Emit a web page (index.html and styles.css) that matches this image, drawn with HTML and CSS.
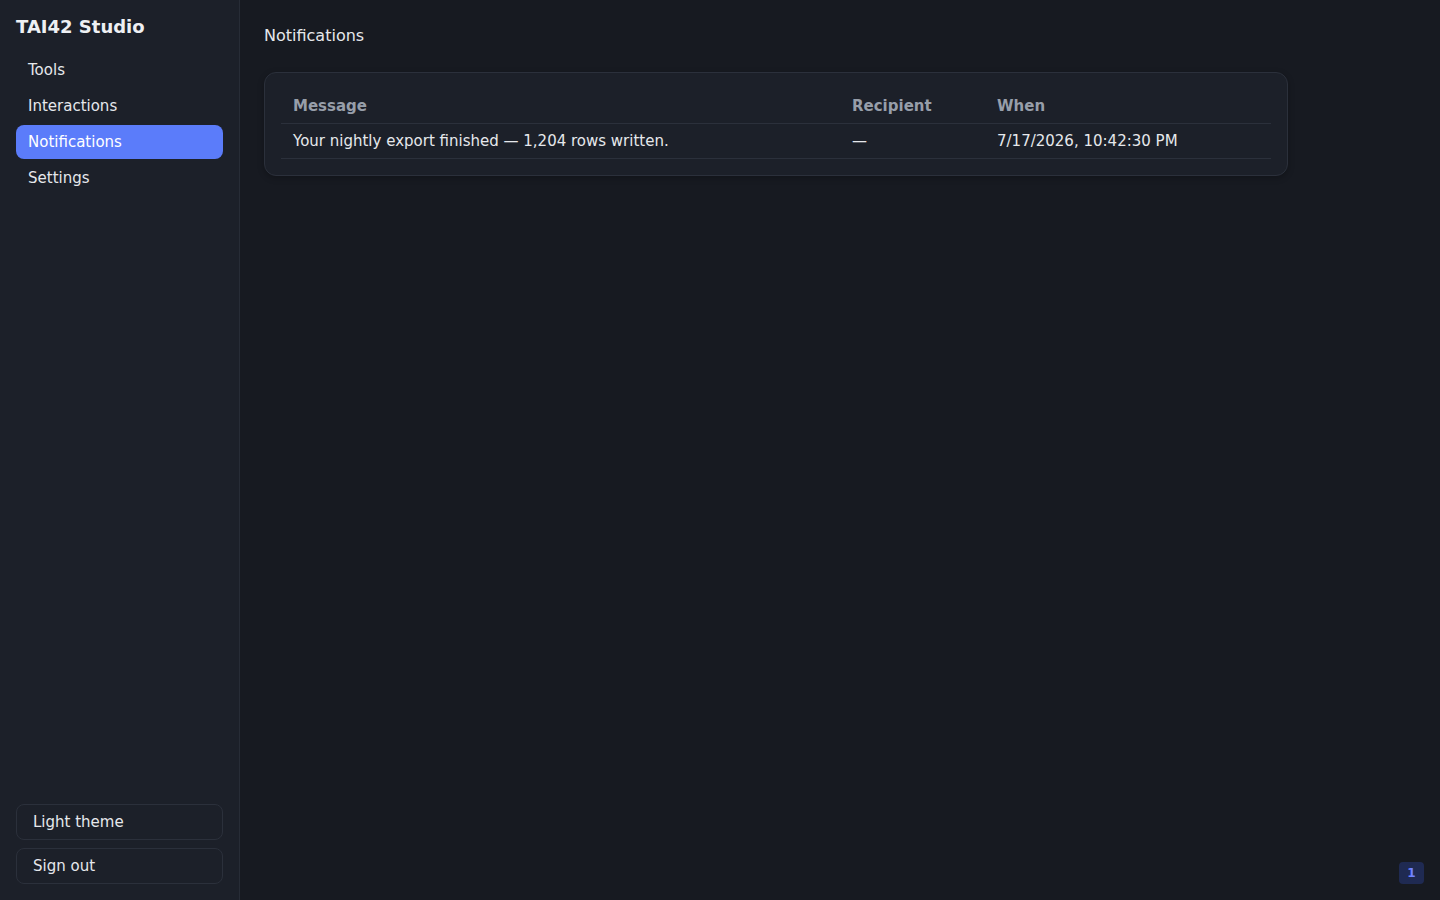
FILE: index.html
```html
<!DOCTYPE html>
<html>
<head>
  <meta charset="UTF-8">
  <title>TAI42 Studio</title>
  <link rel="stylesheet" href="styles.css">
</head>
<body>
  <div class="app">
    <aside class="sidebar">
      <div class="brand">TAI42 Studio</div>
      <nav class="nav">
        <a class="nav-item">Tools</a>
        <a class="nav-item">Interactions</a>
        <a class="nav-item active">Notifications</a>
        <a class="nav-item">Settings</a>
      </nav>
      <div class="sidebar-footer">
        <button class="side-btn">Light theme</button>
        <button class="side-btn">Sign out</button>
      </div>
    </aside>

    <main class="main">
      <h1 class="page-title">Notifications</h1>
      <div class="card">
        <table class="table">
          <thead>
            <tr>
              <th class="col-msg">Message</th>
              <th class="col-rcpt">Recipient</th>
              <th class="col-when">When</th>
            </tr>
          </thead>
          <tbody>
            <tr>
              <td>Your nightly export finished — 1,204 rows written.</td>
              <td>—</td>
              <td>7/17/2026, 10:42:30 PM</td>
            </tr>
          </tbody>
        </table>
      </div>
    </main>
  </div>
  <div class="dev-badge">1</div>
</body>
</html>
```

FILE: styles.css
```css
*{box-sizing:border-box;}
html,body{height:100%;}
body{margin:0;font-family:"DejaVu Sans",Verdana,sans-serif;background:#171a21;color:#e6e8ec;}

.app{display:flex;height:100vh;}

.sidebar{
  width:240px;
  flex-shrink:0;
  background:#1c2029;
  border-right:1px solid #272c36;
  padding:16px;
  display:flex;
  flex-direction:column;
}
.brand{font-size:18px;font-weight:bold;color:#eef0f3;line-height:21px;margin-bottom:16px;}

.nav{display:flex;flex-direction:column;gap:2px;}
.nav-item{
  display:block;
  height:34px;
  line-height:34px;
  padding:0 12px;
  font-size:15px;
  color:#e6e8ec;
  border-radius:8px;
  cursor:pointer;
}
.nav-item.active{background:#5b7cfa;color:#fff;}

.sidebar-footer{margin-top:auto;display:flex;flex-direction:column;gap:8px;}
.side-btn{
  height:36px;
  padding:0 16px;
  text-align:left;
  font-family:inherit;
  font-size:15px;
  color:#e6e8ec;
  background:#1c2029;
  border:1px solid #2b303b;
  border-radius:8px;
  cursor:pointer;
}

.main{flex:1;padding:24px;}
.page-title{margin:1px 0 25px 0;font-size:16px;font-weight:normal;line-height:22px;color:#e6e8ec;}

.card{
  max-width:1024px;
  background:#1c2029;
  border:1px solid #2b303b;
  border-radius:12px;
  padding:16px;
  box-shadow:0 2px 6px rgba(0,0,0,0.25);
}

.table{width:100%;border-collapse:collapse;font-size:15px;}
.table th,.table td{text-align:left;padding:0 12px;border-bottom:1px solid #2b303b;}
.table th{height:34px;font-weight:bold;color:#979ea9;}
.table td{height:35px;color:#e6e8ec;}
.col-msg{width:559px;}
.col-rcpt{width:145px;}

.dev-badge{
  position:fixed;
  right:16px;
  bottom:16px;
  width:25px;
  height:22px;
  border-radius:4px;
  background:#1f2a52;
  color:#6f83ff;
  font-size:12px;
  font-weight:bold;
  display:flex;
  align-items:center;
  justify-content:center;
}
```
